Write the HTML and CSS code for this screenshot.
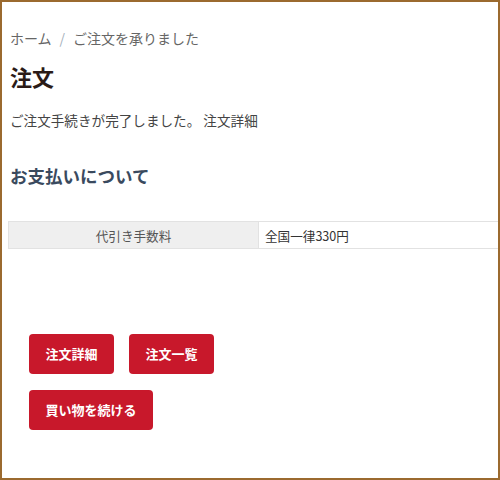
FILE: index.html
```html
<!DOCTYPE html>
<html>
	<head>
		<meta charset="utf-8" />
		<title>注文</title>
		<link rel="stylesheet" href="styles.css">
	</head>
	<body>
		<div id="frame">
			<ul class="breadcrumb">
				<li><a href="#">ホーム</a></li>
				<li class="sep">/</li>
				<li>ご注文を承りました</li>
			</ul>
			<h1 class="title">注文</h1>
			<p class="done">ご注文手続きが完了しました。 <a href="#">注文詳細</a></p>
			<h2 class="pay_title">お支払いについて</h2>
			<table class="pay_table">
				<tr>
					<th>代引き手数料</th>
					<td>全国一律330円</td>
				</tr>
			</table>
			<div class="btn_wrap">
				<div class="btn_row">
					<a class="btn" href="#">注文詳細</a>
					<a class="btn" href="#">注文一覧</a>
				</div>
				<div class="btn_row">
					<a class="btn" href="#">買い物を続ける</a>
				</div>
			</div>
		</div>
	</body>
</html>
```

FILE: styles.css
```css
*{
	margin:0;
	padding:0;
	list-style: none;
	box-sizing: border-box;
}
body{
	font-family: "Noto Sans CJK JP", "Noto Sans", sans-serif;
	background: #fff;
}
a{text-decoration: none;color: inherit;}
#frame{
	width:500px;
	height:480px;
	border: 2px solid #9b6a2f;
	padding: 26px 0 0 8px;
	overflow: hidden;
}
.breadcrumb{
	display: flex;
	gap: 8px;
	font-size: 14px;
	line-height: 20px;
	color: #666;
}
	.breadcrumb .sep{color: #a5b0bb;}
.title{
	margin-top: 13px;
	font-size: 22px;
	line-height: 30px;
	font-weight: bold;
	color: #2b1b17;
}
.done{
	margin-top: 19px;
	font-size: 13.6px;
	line-height: 20px;
	color: #444;
}
.pay_title{
	margin-top: 33px;
	font-size: 17.5px;
	line-height: 26px;
	font-weight: bold;
	color: #3a4a5e;
}
.pay_table{
	margin: 32px 0 0 -2px;
	width: 500px;
	border-collapse: collapse;
	font-size: 12.6px;
}
	.pay_table th,.pay_table td{
		height: 27px;
		border: 1px solid #e2e2e2;
		font-weight: normal;
		padding: 0 6px;
	}
	.pay_table th{
		width: 250px;
		background: #efefef;
		color: #555;
		text-align: center;
	}
	.pay_table td{
		color: #333;
		text-align: left;
	}
.btn_wrap{
	margin: 85px 0 0 19px;
	display: flex;
	flex-direction: column;
	gap: 16px;
}
.btn_row{
	display: flex;
	gap: 15px;
}
.btn{
	display: block;
	height: 40px;
	line-height: 40px;
	padding: 0 16.5px;
	border-radius: 4px;
	background: #c8182b;
	color: #fff;
	font-size: 13px;
	font-weight: bold;
}
```
